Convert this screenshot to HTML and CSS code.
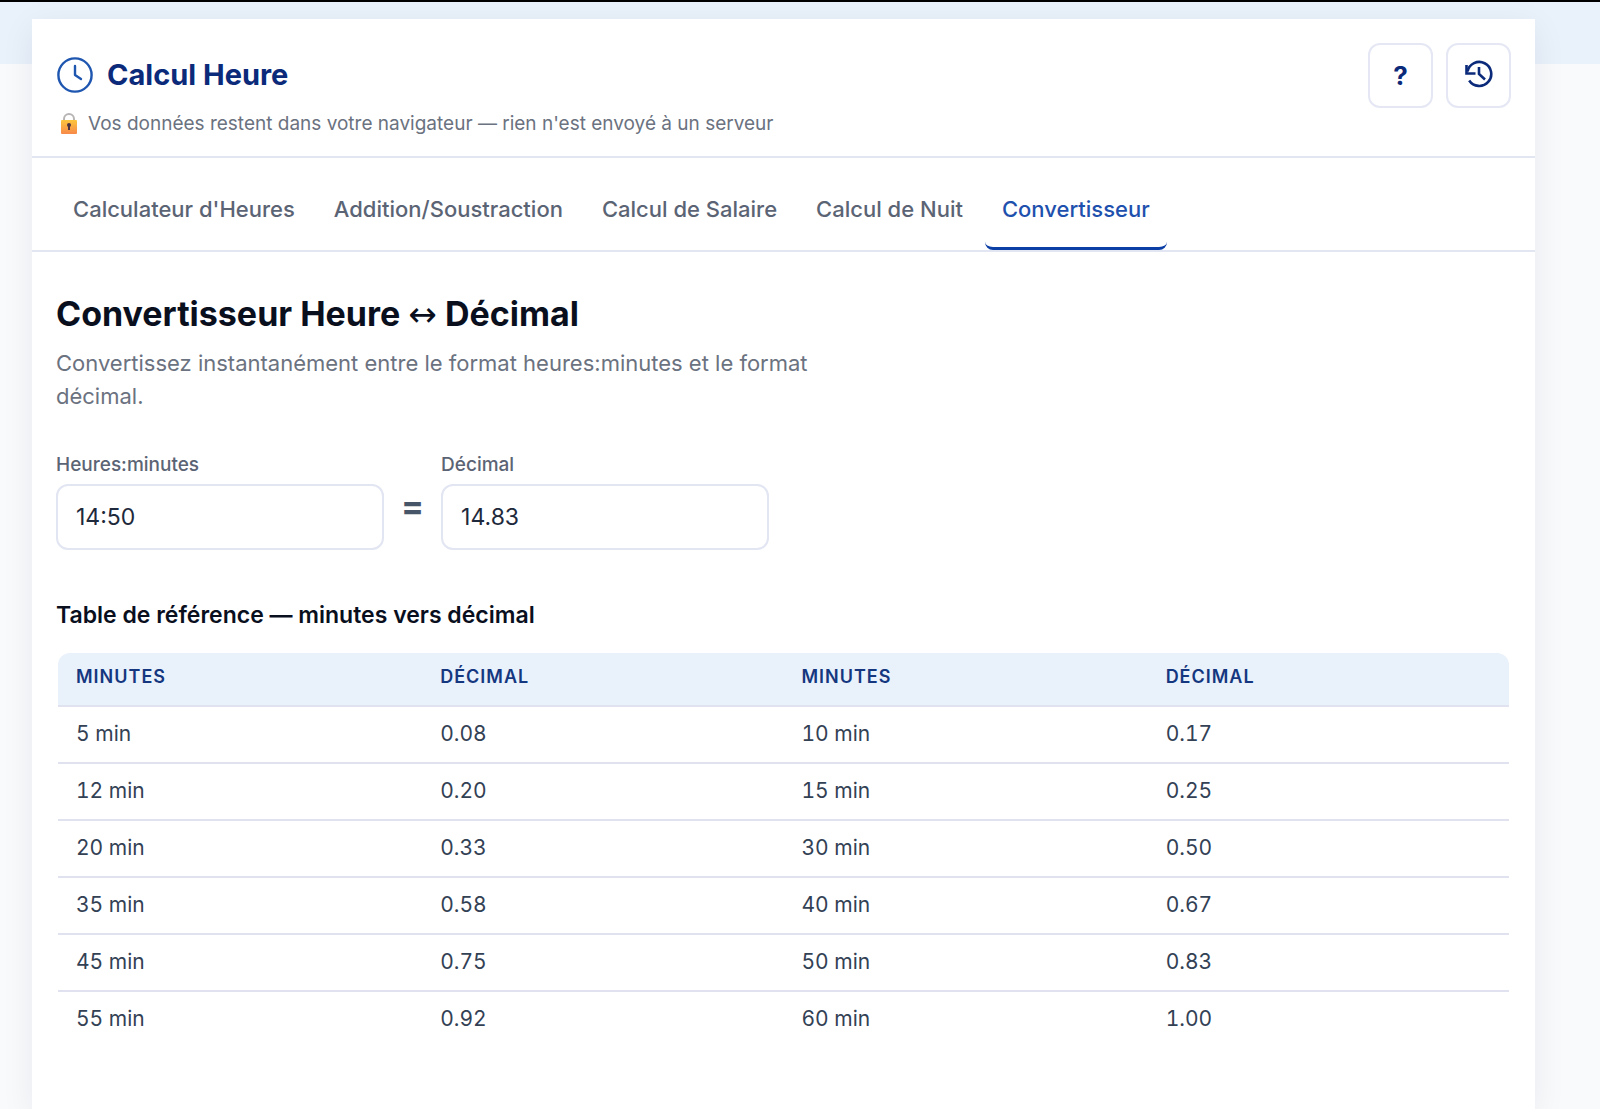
FILE: index.html
```html
<!DOCTYPE html>
<html lang="fr">
<head>
  <meta charset="UTF-8">
  <meta name="viewport" content="width=device-width, initial-scale=1.0">
  <title>Calcul Heure</title>
  <link rel="stylesheet" href="styles.css">
</head>
<body>

  <div class="app">
    <header class="app-header">
      <div class="brand">
        <h1 class="brand-title">
          <svg class="brand-icon" viewBox="0 0 36 36" fill="none" stroke="currentColor" stroke-width="2.400" stroke-linecap="round" stroke-linejoin="round" aria-hidden="true">
            <circle cx="18" cy="18" r="16.600"/>
            <path d="M18 9v9l6 4"/>
          </svg>
          Calcul Heure
        </h1>
        <p class="privacy">
          <svg class="lock" viewBox="0 0 18 22" aria-hidden="true">
            <defs>
              <linearGradient id="lock-body" x1="0" y1="0" x2="0" y2="1">
                <stop offset="0" stop-color="#fcc63c"/>
                <stop offset="1" stop-color="#f7894a"/>
              </linearGradient>
            </defs>
            <path d="M4 9V6a5 5 0 0 1 10 0v3" fill="none" stroke="#b9b5b5" stroke-width="2"/>
            <rect x="1" y="7" width="16" height="14" rx="1" fill="url(#lock-body)"/>
            <circle cx="9" cy="12" r="2" fill="#4b3440"/>
            <path d="M8 12h2v5H8z" fill="#4b3440"/>
          </svg>
          Vos données restent dans votre navigateur — rien n'est envoyé à un serveur
        </p>
      </div>
      <div class="actions">
        <button class="icon-btn" type="button" aria-label="Aide">?</button>
        <button class="icon-btn" type="button" aria-label="Historique">
          <svg width="30" height="32" viewBox="0 0 30 32" fill="none" stroke="currentColor" stroke-width="2.600" aria-hidden="true">
            <path d="M3.500 11.500A12 12 0 1 1 5.200 20.500"/>
            <path d="M2.500 5v8.500h9"/>
            <path d="M15 7v7l6 5.500"/>
          </svg>
        </button>
      </div>
    </header>

    <nav class="tabs">
      <a class="tab" href="#calculateur">Calculateur d'Heures</a>
      <a class="tab" href="#addition">Addition/Soustraction</a>
      <a class="tab" href="#salaire">Calcul de Salaire</a>
      <a class="tab" href="#nuit">Calcul de Nuit</a>
      <a class="tab active" href="#convertisseur" aria-current="page">Convertisseur</a>
    </nav>

    <main class="panel" id="convertisseur">
      <h2>Convertisseur Heure <span class="arrow">↔</span> Décimal</h2>
      <p class="intro">Convertissez instantanément entre le format heures:minutes et le format décimal.</p>

      <form class="converter">
        <div class="field">
          <label for="hm">Heures:minutes</label>
          <input type="text" id="hm" value="14:50">
        </div>
        <span class="equals">=</span>
        <div class="field">
          <label for="dec">Décimal</label>
          <input type="text" id="dec" value="14.83">
        </div>
      </form>

      <h3>Table de référence — minutes vers décimal</h3>
      <table class="ref-table">
        <thead>
          <tr><th>Minutes</th><th>Décimal</th><th>Minutes</th><th>Décimal</th></tr>
        </thead>
        <tbody>
          <tr><td>5 min</td><td>0.08</td><td>10 min</td><td>0.17</td></tr>
          <tr><td>12 min</td><td>0.20</td><td>15 min</td><td>0.25</td></tr>
          <tr><td>20 min</td><td>0.33</td><td>30 min</td><td>0.50</td></tr>
          <tr><td>35 min</td><td>0.58</td><td>40 min</td><td>0.67</td></tr>
          <tr><td>45 min</td><td>0.75</td><td>50 min</td><td>0.83</td></tr>
          <tr><td>55 min</td><td>0.92</td><td>60 min</td><td>1.00</td></tr>
        </tbody>
      </table>
    </main>
  </div>

</body>
</html>
```
FILE: styles.css
```css
* {
  box-sizing: border-box;
  margin: 0;
}
body {
  font-family: 'Inter', 'Liberation Sans', sans-serif;
  color: #334155;
  background: #f8fafc linear-gradient(#e9f1fb 64px, #f8fafc 64px) no-repeat;
  border-top: 2px solid #000;
  padding: 17px 65px 0 32px;
}
.app {
  min-height: calc(100vh - 19px);
  background: #fff;
  box-shadow: 0 8px 32px rgba(15, 23, 42, 0.07);
}

/* header */
.app-header {
  display: flex;
  justify-content: space-between;
  padding: 24px;
  height: 139px;
  border-bottom: 2px solid #e2e6f3;
}
.brand-title {
  display: flex;
  align-items: center;
  gap: 14px;
  font-size: 29px;
  line-height: 36px;
  font-weight: 700;
  color: #0b2a7a;
  padding: 14px 0 0 1px;
}
.brand-icon {
  width: 36px;
  height: 36px;
  color: #1e56b0;
}
.privacy {
  display: flex;
  align-items: center;
  gap: 10px;
  font-size: 19px;
  line-height: 24px;
  color: #6b7280;
  padding-left: 4px;
  margin-top: 19px;
}
.lock {
  width: 18px;
  height: 22px;
}
.actions {
  display: flex;
  gap: 13px;
}
.icon-btn {
  display: flex;
  align-items: center;
  justify-content: center;
  width: 65px;
  height: 65px;
  padding: 0;
  font-family: inherit;
  font-size: 26px;
  font-weight: 700;
  color: #0b2a7a;
  background: #fff;
  border: 2px solid #e5e8f4;
  border-radius: 12px;
}

/* tabs */
.tabs {
  display: flex;
  align-items: flex-end;
  gap: 5px;
  height: 94px;
  padding: 0 24px;
  border-bottom: 2px solid #e2e6f3;
}
.tab {
  padding: 24px 17px 22px;
  font-size: 22px;
  line-height: 32px;
  font-weight: 500;
  color: #5b6474;
  text-decoration: none;
  border-bottom: 3px solid transparent;
  border-radius: 8px;
}
.tab.active {
  color: #1e50ad;
  border-bottom-color: #0b3fa5;
}

/* converter */
.panel {
  padding: 40px 24px;
}
h2 {
  font-size: 34px;
  line-height: 44px;
  font-weight: 700;
  color: #0a0f1e;
}
.arrow {
  font-family: 'DejaVu Sans', sans-serif;
  font-weight: 400;
}
.intro {
  max-width: 780px;
  margin-top: 11px;
  font-size: 22px;
  line-height: 33px;
  color: #6b7280;
}
.converter {
  display: flex;
  align-items: flex-end;
  gap: 17px;
  margin-top: 40px;
}
.field {
  display: flex;
  flex-direction: column;
  gap: 7px;
}
.field label {
  font-size: 19px;
  line-height: 24px;
  font-weight: 500;
  color: #5b6474;
}
.field input {
  width: 328px;
  height: 66px;
  padding: 0 18px;
  font-family: inherit;
  font-size: 23px;
  color: #1e293b;
  background: #fff;
  border: 2px solid #e2e5f2;
  border-radius: 12px;
}
.equals {
  font-size: 34px;
  line-height: 32px;
  font-weight: 700;
  color: #475569;
  padding-bottom: 28px;
}
h3 {
  margin-top: 49px;
  font-size: 23px;
  line-height: 32px;
  font-weight: 600;
  color: #0a0f1e;
}
.ref-table {
  width: 100%;
  margin-top: 22px;
  border-collapse: separate;
  border-spacing: 0;
  padding: 0 2px;
  font-size: 21px;
  font-variant-numeric: tabular-nums;
}
.ref-table th,
.ref-table td {
  text-align: left;
  padding: 0 18px;
  border-bottom: 2px solid #e0e3ef;
}
.ref-table th {
  height: 54px;
  padding-bottom: 6px;
  font-size: 18px;
  font-weight: 600;
  letter-spacing: 1px;
  text-transform: uppercase;
  color: #14377f;
  background: #e9f1fb;
}
.ref-table th:first-child {
  border-top-left-radius: 12px;
}
.ref-table th:last-child {
  border-top-right-radius: 12px;
}
.ref-table td {
  height: 57px;
  padding-bottom: 2px;
}
.ref-table tbody tr:last-child td {
  border-bottom-color: transparent;
}
```
